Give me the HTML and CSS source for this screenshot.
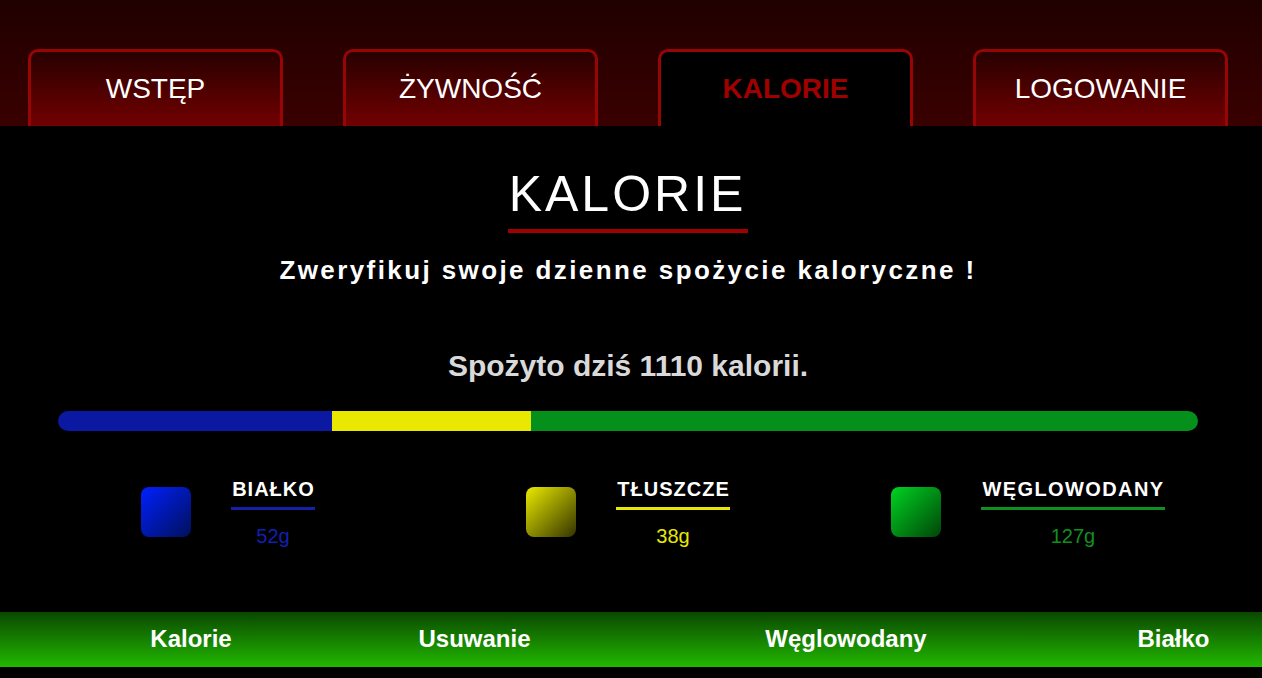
FILE: index.html
```html
<!DOCTYPE html>
<html lang="pl">
<head>
<meta charset="utf-8">
<title>Kalorie</title>
<link rel="stylesheet" href="styles.css">
</head>
<body>
<header class="top">
  <nav class="tabs">
    <a class="tab" href="#">WSTĘP</a>
    <a class="tab" href="#">ŻYWNOŚĆ</a>
    <a class="tab active" href="#">KALORIE</a>
    <a class="tab" href="#">LOGOWANIE</a>
  </nav>
</header>
<main class="main">
  <div class="wrap">
    <div class="title-row"><h1 class="title">KALORIE</h1></div>
    <p class="subtitle">Zweryfikuj swoje dzienne spożycie kaloryczne !</p>
    <p class="consumed">Spożyto dziś 1110 kalorii.</p>
    <div class="bar">
      <div class="seg seg-blue" style="width:24%"></div>
      <div class="seg seg-yellow" style="width:17.5%"></div>
      <div class="seg seg-green" style="width:58.5%"></div>
    </div>
    <div class="legend">
      <div class="item">
        <div class="swatch swatch-blue"></div>
        <div class="info">
          <div class="label label-blue">BIAŁKO</div>
          <div class="value value-blue">52g</div>
        </div>
      </div>
      <div class="item">
        <div class="swatch swatch-yellow"></div>
        <div class="info">
          <div class="label label-yellow">TŁUSZCZE</div>
          <div class="value value-yellow">38g</div>
        </div>
      </div>
      <div class="item">
        <div class="swatch swatch-green"></div>
        <div class="info">
          <div class="label label-green label-wide">WĘGLOWODANY</div>
          <div class="value value-green">127g</div>
        </div>
      </div>
    </div>
  </div>
</main>
<footer class="footer">
  <nav class="foot-nav">
    <a href="#">Kalorie</a>
    <a href="#">Usuwanie</a>
    <a href="#">Węglowodany</a>
    <a href="#">Białko</a>
  </nav>
</footer>
</body>
</html>
```

FILE: styles.css
```css
* { box-sizing: border-box; }

html, body {
  margin: 0;
  padding: 0;
  background: #000;
  font-family: "Liberation Sans", Arial, sans-serif;
  color: #fff;
}

a { text-decoration: none; }

.top {
  height: 126px;
  background: linear-gradient(#200000, #3a0000);
  padding-top: 49px;
}

.tabs {
  width: 1200px;
  margin-left: 28px;
  display: flex;
  gap: 60px;
}

.tab {
  width: 255px;
  height: 77px;
  border: 3px solid #970505;
  border-bottom: none;
  border-radius: 10px 10px 0 0;
  background: linear-gradient(#280000, #720000);
  color: #fff;
  font-size: 28px;
  display: flex;
  align-items: center;
  justify-content: center;
}

.tab.active {
  background: #000;
  color: #a00000;
  font-weight: bold;
}

.main {
  height: 486px;
}

.wrap {
  width: 1200px;
  margin-left: 28px;
  padding-top: 39px;
  display: flex;
  flex-direction: column;
  align-items: center;
}

.title-row {
  display: flex;
  justify-content: center;
}

.title {
  margin: 0;
  font-size: 50px;
  font-weight: normal;
  line-height: 58px;
  letter-spacing: 3px;
  padding: 0 2px 6px 1px;
  border-bottom: 4px solid #a00000;
}

.subtitle {
  margin: 22px 0 0;
  font-size: 26px;
  font-weight: bold;
  line-height: 30px;
  letter-spacing: 2.4px;
}

.consumed {
  margin: 63px 0 0;
  font-size: 30px;
  font-weight: bold;
  line-height: 35px;
  color: #d9d9d9;
}

.bar {
  margin-top: 28px;
  width: 1140px;
  height: 20px;
  border-radius: 10px;
  overflow: hidden;
  display: flex;
}

.seg { height: 100%; }
.seg-blue { background: #0a18a2; }
.seg-yellow { background: #e8e800; }
.seg-green { background: #04901a; }

.legend {
  margin-top: 46px;
  width: 1200px;
  display: grid;
  grid-template-columns: repeat(3, 1fr);
}

.item {
  display: flex;
  align-items: center;
  justify-content: center;
  gap: 40px;
}

.swatch {
  width: 50px;
  height: 50px;
  border-radius: 8px;
  margin-bottom: 2px;
}
.swatch-blue { background: linear-gradient(135deg, #0020ff, #00105a); }
.swatch-yellow { background: linear-gradient(135deg, #eaea00, #333300); }
.swatch-green { background: linear-gradient(135deg, #00d322, #004508); }

.info {
  display: flex;
  flex-direction: column;
  align-items: center;
}

.label {
  font-size: 20px;
  font-weight: bold;
  line-height: 24px;
  letter-spacing: 1px;
  padding-left: 1px;
  padding-bottom: 6px;
  border-bottom: 3px solid;
}
.label-wide { letter-spacing: 1.4px; }
.label-blue { border-color: #1420a8; }
.label-yellow { border-color: #e8e800; }
.label-green { border-color: #10901e; }

.value {
  margin-top: 14px;
  font-size: 20px;
  line-height: 24px;
}
.value-blue { color: #1020b0; }
.value-yellow { color: #e8e800; }
.value-green { color: #10901e; }

.footer {
  height: 55px;
  background: linear-gradient(#0a4800, #22b800);
}

.foot-nav {
  height: 100%;
  display: grid;
  grid-template-columns: 382px 185px 558px 97px;
  justify-items: center;
  align-items: center;
  padding-bottom: 2px;
}

.foot-nav a {
  color: #fff;
  font-size: 24px;
  font-weight: bold;
}
```
